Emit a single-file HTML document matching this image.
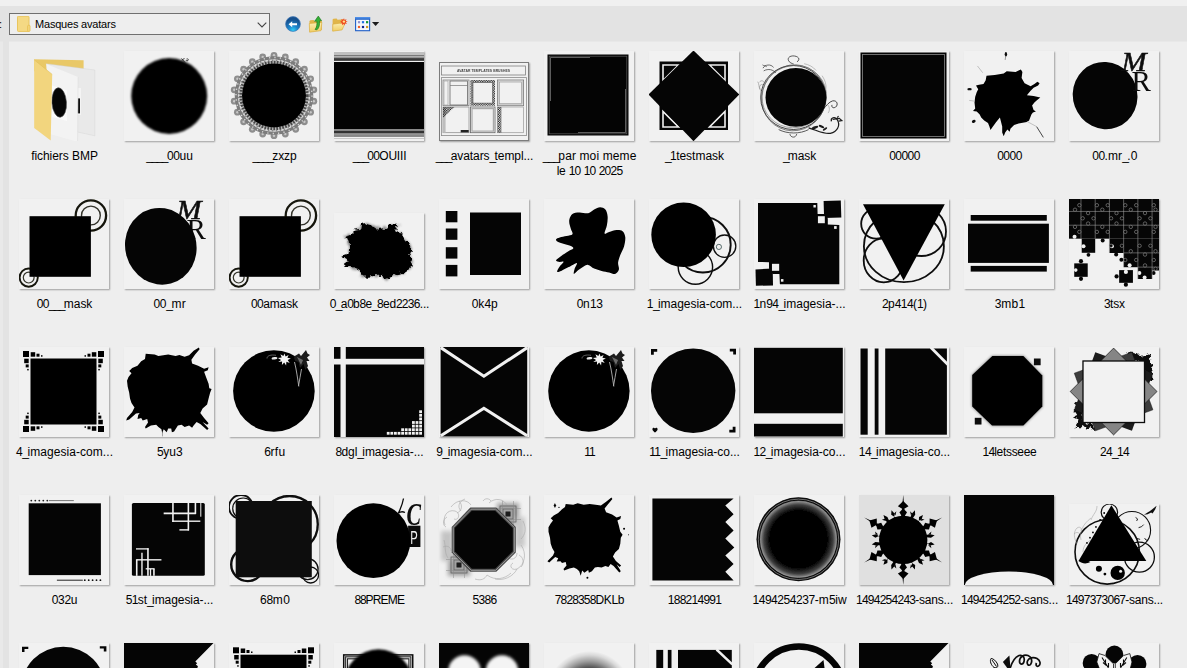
<!DOCTYPE html>
<html lang="fr"><head><meta charset="utf-8"><title>Masques avatars</title>
<style>
html,body{margin:0;padding:0}
body{width:1187px;height:668px;overflow:hidden;position:relative;background:#e3e3e3;font-family:"Liberation Sans",sans-serif;font-size:12px;color:#000}
#top{position:absolute;left:0;top:0;width:1187px;height:6px;background:#f0f0f0}
#lstrip{position:absolute;left:0;top:41px;width:3px;height:627px;background:#e9e9e9;border-top:1px solid #e6e6e6;box-sizing:border-box}
#list{position:absolute;left:9px;top:41px;width:1178px;height:626px;background:#eeeeee;overflow:hidden;border-top:1px solid #e8e8e8}
#combo{position:absolute;left:9px;top:13px;width:259px;height:20px;border:1px solid #6f6f6f;background:#eeeeee}
#combo .txt{position:absolute;left:25px;top:3px;line-height:14px;white-space:nowrap;font-size:11px;letter-spacing:-0.2px}
#lbl{position:absolute;left:-1px;top:17px;line-height:14px;font-size:11px}
.t{position:absolute;background:#f1f1f1;box-shadow:1px 1px 1.5px rgba(0,0,0,.33)}
.t svg{display:block;position:absolute;left:0;top:0}
.n{position:absolute;width:130px;text-align:center;white-space:nowrap;line-height:15px;height:15px}
.ic{position:absolute}
</style></head><body>
<svg width="0" height="0" style="position:absolute"><defs><filter id="txf" x="-10%" y="-10%" width="120%" height="120%"><feGaussianBlur stdDeviation=".22"/></filter></defs></svg>
<div id="top"></div><div id="lstrip"></div>
<div id="lbl">:</div>
<div id="combo"><svg class="ic" style="left:7px;top:2px" width="14" height="17" viewBox="0 0 14 17"><rect x=".5" y=".3" width="11.500" height="15.100" rx=".8" fill="#f4d984" stroke="#e9c55e" stroke-width="1"/><rect x="10.700" y="9.300" width="2.300" height="6.100" rx=".8" fill="#f4d984" stroke="#e6be50" stroke-width=".9"/></svg><span class="txt">Masques avatars</span><svg class="ic" style="left:247px;top:8px" width="10" height="6" viewBox="0 0 10 6"><path d="M0.7 0.7L5 5l4.3-4.3" fill="none" stroke="#444" stroke-width="1.1"/></svg></div>
<svg class="ic" style="left:280px;top:10px" width="105" height="28" viewBox="280 10 105 28">
<defs><radialGradient id="bk" cx="50%" cy="92%" r="75%"><stop offset="0" stop-color="#2fd0f8"/><stop offset=".4" stop-color="#1f86cc"/><stop offset="1" stop-color="#174f8c"/></radialGradient>
<linearGradient id="fy" x1="0" y1="0" x2="0" y2="1"><stop offset="0" stop-color="#fbefb4"/><stop offset="1" stop-color="#f0cd63"/></linearGradient>
<linearGradient id="vb" x1="0" y1="0" x2="0" y2="1"><stop offset="0" stop-color="#5c9cf0"/><stop offset="1" stop-color="#1f5fc4"/></linearGradient>
<filter id="tb" x="-10%" y="-10%" width="120%" height="120%"><feGaussianBlur stdDeviation=".25"/></filter></defs>
<g filter="url(#tb)">
<circle cx="293" cy="24" r="7.400" fill="url(#bk)" stroke="#3f78b8" stroke-width=".7"/>
<path d="M288.600 24.200l3.600-3v2h4.800v2h-4.800v2z" fill="#fff"/>
<path d="M309.400 21l1-.8l3.200-.3l1 1.300l7.200-.6v9.400l-12 1.800z" fill="#e0b548"/>
<path d="M309.300 23.500l12.600-1.100l-1 8.300l-11.300 1.500z" fill="url(#fy)" stroke="#d9aa3a" stroke-width=".6"/>
<path d="M315 29.500c1.700-2 2.200-4.800 1.800-8.400l-2.200.2l3.700-5.200l3.200 4.600l-2 .1c.5 4.500-.6 7.300-2.500 9z" fill="#35b035" stroke="#14701a" stroke-width=".6"/>
<path d="M332.600 19.500l.8-.7l3.200-.3l1 1.300l6-.5l-1 9.700l-10 1.800z" fill="#e0b548"/>
<path d="M332.800 24.200l12.600-1.800l-3.300 7.500l-9.400 1.300z" fill="url(#fy)" stroke="#d9aa3a" stroke-width=".6"/>
<path d="M344 18.200l.7 1.800l1.800-.9l-.7 1.800l1.900.6l-1.800.8l.9 1.700l-1.900-.5l-.3 1.900l-1.200-1.500l-1.400 1.300l.1-1.900l-1.900.2l1.400-1.300l-1.600-1.100l1.900-.3l-.6-1.800l1.700.8z" fill="#f04a1e"/>
<circle cx="343.900" cy="21.600" r="1.200" fill="#ffe08a"/>
<rect x="355.600" y="17.600" width="14" height="13.100" fill="#f6f8fc" stroke="#2060c8" stroke-width="1.100"/>
<rect x="355.100" y="17.100" width="15" height="2.700" fill="url(#vb)"/>
<rect x="357.900" y="21.100" width="2.200" height="2.200" fill="#9292cc"/><rect x="361.900" y="21.100" width="2.200" height="2.200" fill="#2272e4"/><rect x="366" y="21.100" width="2.200" height="2.200" fill="#109434"/>
<rect x="357.900" y="25.900" width="2.200" height="2.200" fill="#f0602c"/><rect x="361.900" y="25.900" width="2.200" height="2.200" fill="#10228e"/><rect x="366" y="25.900" width="2.200" height="2.200" fill="#d09a20"/>
<path d="M372 22h7.200l-3.600 3.900z" fill="#1a1a1a"/>
</g></svg>
<div id="list">
<div class="t" style="left:10px;top:9px;width:90px;height:90px;background:none;box-shadow:none"><svg width="90" height="90" viewBox="0 0 90 90">
<path d="M15.200 8.200L64.600 9.200L64.600 30L30 30L15.200 20z" fill="#e9c867"/>
<path d="M27.200 12.700L75.800 19L75.800 84.800L58.600 81z" fill="#e9e9e9"/>
<path d="M27.200 12.700L75.800 19L75.800 84.800L58.600 81z" fill="none" stroke="#d2d2d2" stroke-width=".4"/>
<rect x="57.500" y="37" width="4.500" height="27" fill="#f4f4f4"/>
<rect x="58.200" y="47.400" width="2.800" height="15" fill="#111"/>
<path d="M27.200 13L59.100 26.100L58.600 90.800L31.700 83.300z" fill="#f3f3f3"/>
<path d="M59.100 26.100L58.600 90.800" stroke="#d8d8d8" stroke-width=".5"/>
<path d="M33 34.500L48 39.500L48 70L33 66z" fill="#fbfbfb"/>
<ellipse cx="40.200" cy="51.500" rx="7.300" ry="14.800" fill="#060606" stroke="#555" stroke-width=".6" transform="rotate(-4 40.200 51.500)"/>
<path d="M15.200 8.800L33.200 23.400L31.700 89.600L15.200 77z" fill="#f2d57e"/>
<path d="M15.200 8.800L33.200 23.400" stroke="#e3bf58" stroke-width=".6"/>
</svg></div>
<div class="t" style="left:115px;top:9px;width:90px;height:90px;"><svg width="90" height="90" viewBox="0 0 90 90"><defs><filter id="b01" x="-20%" y="-20%" width="140%" height="140%"><feGaussianBlur stdDeviation="1.1"/></filter></defs><circle cx="45.200" cy="45" r="38" fill="#050505" filter="url(#b01)"/><path d="M57.500 7.500l3.500 4m-.5-4.500l-2.500 2.500m4.500-1.500c1.500-.5 2.500 .5 1.500 1.500c-1 .8-2 .3-1.500-.5" stroke="#1a1a1a" stroke-width=".8" fill="none"/></svg></div>
<div class="t" style="left:220px;top:9px;width:90px;height:90px;"><svg width="90" height="90" viewBox="0 0 90 90"><defs><filter id="b02" x="-20%" y="-20%" width="140%" height="140%"><feGaussianBlur stdDeviation="0.45"/></filter></defs><g filter="url(#b02)"><circle cx="84.8" cy="50.2" r="3.400" fill="#8e8e8e"/><circle cx="84.8" cy="50.2" r="1.200" fill="#c8c8c8"/><circle cx="81.6" cy="61.2" r="3.400" fill="#8e8e8e"/><circle cx="81.6" cy="61.2" r="1.200" fill="#c8c8c8"/><circle cx="75.4" cy="70.8" r="3.400" fill="#8e8e8e"/><circle cx="75.4" cy="70.8" r="1.200" fill="#c8c8c8"/><circle cx="66.7" cy="78.3" r="3.400" fill="#8e8e8e"/><circle cx="66.7" cy="78.3" r="1.200" fill="#c8c8c8"/><circle cx="56.3" cy="83.1" r="3.400" fill="#8e8e8e"/><circle cx="56.3" cy="83.1" r="1.200" fill="#c8c8c8"/><circle cx="45.0" cy="84.7" r="3.400" fill="#8e8e8e"/><circle cx="45.0" cy="84.7" r="1.200" fill="#c8c8c8"/><circle cx="33.7" cy="83.1" r="3.400" fill="#8e8e8e"/><circle cx="33.7" cy="83.1" r="1.200" fill="#c8c8c8"/><circle cx="23.3" cy="78.3" r="3.400" fill="#8e8e8e"/><circle cx="23.3" cy="78.3" r="1.200" fill="#c8c8c8"/><circle cx="14.6" cy="70.8" r="3.400" fill="#8e8e8e"/><circle cx="14.6" cy="70.8" r="1.200" fill="#c8c8c8"/><circle cx="8.4" cy="61.2" r="3.400" fill="#8e8e8e"/><circle cx="8.4" cy="61.2" r="1.200" fill="#c8c8c8"/><circle cx="5.2" cy="50.2" r="3.400" fill="#8e8e8e"/><circle cx="5.2" cy="50.2" r="1.200" fill="#c8c8c8"/><circle cx="5.2" cy="38.8" r="3.400" fill="#8e8e8e"/><circle cx="5.2" cy="38.8" r="1.200" fill="#c8c8c8"/><circle cx="8.4" cy="27.8" r="3.400" fill="#8e8e8e"/><circle cx="8.4" cy="27.8" r="1.200" fill="#c8c8c8"/><circle cx="14.6" cy="18.2" r="3.400" fill="#8e8e8e"/><circle cx="14.6" cy="18.2" r="1.200" fill="#c8c8c8"/><circle cx="23.3" cy="10.7" r="3.400" fill="#8e8e8e"/><circle cx="23.3" cy="10.7" r="1.200" fill="#c8c8c8"/><circle cx="33.7" cy="5.9" r="3.400" fill="#8e8e8e"/><circle cx="33.7" cy="5.9" r="1.200" fill="#c8c8c8"/><circle cx="45.0" cy="4.3" r="3.400" fill="#8e8e8e"/><circle cx="45.0" cy="4.3" r="1.200" fill="#c8c8c8"/><circle cx="56.3" cy="5.9" r="3.400" fill="#8e8e8e"/><circle cx="56.3" cy="5.9" r="1.200" fill="#c8c8c8"/><circle cx="66.7" cy="10.7" r="3.400" fill="#8e8e8e"/><circle cx="66.7" cy="10.7" r="1.200" fill="#c8c8c8"/><circle cx="75.4" cy="18.2" r="3.400" fill="#8e8e8e"/><circle cx="75.4" cy="18.2" r="1.200" fill="#c8c8c8"/><circle cx="81.6" cy="27.8" r="3.400" fill="#8e8e8e"/><circle cx="81.6" cy="27.8" r="1.200" fill="#c8c8c8"/><circle cx="84.8" cy="38.8" r="3.400" fill="#8e8e8e"/><circle cx="84.8" cy="38.8" r="1.200" fill="#c8c8c8"/><circle cx="45" cy="44.500" r="37.600" fill="none" stroke="#7c7c7c" stroke-width="3.400"/><circle cx="45" cy="44.500" r="38" fill="none" stroke="#dcdcdc" stroke-width="1.400" stroke-dasharray="1.200 4.230"/><circle cx="45" cy="44.500" r="35.300" fill="none" stroke="#d9d9d9" stroke-width="1.600"/><circle cx="45" cy="44.500" r="35.300" fill="none" stroke="#8a8a8a" stroke-width="1.600" stroke-dasharray="1.500 2.500"/><circle cx="45" cy="44.500" r="33.200" fill="none" stroke="#b8b8b8" stroke-width="3"/><circle cx="45" cy="44.500" r="33.200" fill="none" stroke="#4a4a4a" stroke-width="3" stroke-dasharray="1.700 1.300"/></g><circle cx="45" cy="44.400" r="32" fill="#050505" filter="url(#b02)"/></svg></div>
<div class="t" style="left:325px;top:9px;width:90px;height:90px;"><svg width="90" height="90" viewBox="0 0 90 90"><defs><linearGradient id="sg" x1="0" y1="0" x2="0" y2="1"><stop offset="0" stop-color="#a8a8a8"/><stop offset=".35" stop-color="#4a4a4a"/><stop offset="1" stop-color="#262626"/></linearGradient></defs><rect x="0" y="11" width="90" height="67.100" fill="#040404"/><rect x="0" y="1" width="90" height="3" fill="#c0c0c0"/><rect x="0" y="4" width="90" height="0.9" fill="#666"/><rect x="0" y="4.9" width="90" height="1.2" fill="#b2b2b2"/><rect x="0" y="6.1" width="90" height="3.7" fill="url(#sg)"/><rect x="0" y="78.1" width="90" height="1.9" fill="#828282"/><rect x="0" y="80" width="90" height="2.6" fill="#323232"/><rect x="0" y="82.6" width="90" height="1.6" fill="#949494"/><rect x="0" y="84.2" width="90" height="1.6" fill="#737373"/><rect x="0" y="87" width="90" height="0.6" fill="#b0b0b0"/></svg></div>
<div class="t" style="left:430px;top:20px;width:90px;height:79px;"><svg width="90" height="79" viewBox="0 0 90 79"><rect x=".5" y=".5" width="89" height="78" fill="none" stroke="#7c7c7c" stroke-width="1"/><rect x="2.500" y="4" width="84" height="9" fill="none" stroke="#808080" stroke-width=".8"/><text filter="url(#txf)" x="44.500" y="9.900" font-family="Liberation Sans,sans-serif" font-weight="bold" font-size="3.400" text-anchor="middle" fill="#444" textLength="53">AVATAR TEMPLATES BRUSHES</text><rect x="2.500" y="15.600" width="85" height="58" fill="none" stroke="#8a8a8a" stroke-width=".8"/><defs><pattern id="chk" width="2.400" height="2.400" patternUnits="userSpaceOnUse"><rect width="1.200" height="1.200" fill="#111"/><rect x="1.200" y="1.200" width="1.200" height="1.200" fill="#111"/></pattern></defs><rect x="4" y="18" width="26" height="25.700" fill="none" stroke="#777" stroke-width=".7"/><rect x="5" y="19" width="4" height="24" fill="none" stroke="#999" stroke-width=".6"/><rect x="11" y="19" width="17.500" height="24" fill="none" stroke="#666" stroke-width=".8"/><path d="M11 23.500h17.500" stroke="#777" stroke-width=".7"/><rect x="31.400" y="18" width="24.600" height="25.700" fill="url(#chk)"/><rect x="34" y="20.600" width="19.500" height="20.500" fill="#f1f1f1" stroke="#555" stroke-width=".6"/><rect x="58.400" y="18" width="26.200" height="25.700" fill="none" stroke="#777" stroke-width=".8"/><rect x="60.500" y="20" width="22" height="21.700" fill="none" stroke="#999" stroke-width=".7"/><rect x="59.400" y="19" width="24.200" height="23.700" fill="none" stroke="#aaa" stroke-width=".5"/><rect x="4" y="45" width="26" height="25.700" fill="none" stroke="#888" stroke-width=".7"/><rect x="4" y="45" width="2.600" height="25.700" fill="#bdbdbd"/><path d="M4 45h11.500L4 56z" fill="url(#chk)"/><rect x="21.700" y="68" width="8" height="2.400" fill="#222"/><rect x="31.400" y="45" width="24.600" height="25.700" fill="none" stroke="#666" stroke-width=".8"/><rect x="33" y="46.600" width="21.400" height="22.500" fill="none" stroke="#aaa" stroke-width="1.200"/><rect x="58.400" y="45" width="26.200" height="25.700" fill="none" stroke="#999" stroke-width=".7"/><rect x="58.600" y="45" width="3.800" height="25.700" fill="url(#chk)"/></svg></div>
<div class="t" style="left:535px;top:9px;width:90px;height:90px;"><svg width="90" height="90" viewBox="0 0 90 90"><rect x="3.500" y="3.500" width="81" height="81" fill="#040404"/><rect x="5.200" y="5.200" width="77.600" height="77.600" fill="none" stroke="#5a5a5a" stroke-width=".7"/><path d="M6.500 50V6.500H46" fill="none" stroke="#9a9a9a" stroke-width=".6"/><path d="M34 81.500H81.500V38" fill="none" stroke="#9a9a9a" stroke-width=".6"/></svg></div>
<div class="t" style="left:640px;top:9px;width:90px;height:90px;"><svg width="90" height="90" viewBox="0 0 90 90"><rect x="10.500" y="10.500" width="68.500" height="68.500" fill="#050505"/><g fill="none" stroke="#f0f0f0" stroke-width="1.600"><path d="M14 14h15.500L14 29.500z"/><path d="M76 14h-15.500L76 29.500z"/><path d="M14 76h15.500L14 60.500z"/><path d="M76 76h-15.500L76 60.500z"/></g><path d="M44.500 -0.500L90.200 43.500L44.500 90.200L-0.500 43.500z" fill="#050505"/></svg></div>
<div class="t" style="left:745px;top:9px;width:90px;height:90px;"><svg width="90" height="90" viewBox="0 0 90 90"><defs><filter id="b07" x="-20%" y="-20%" width="140%" height="140%"><feGaussianBlur stdDeviation="0.35"/></filter></defs><g fill="none" stroke="#1a1a1a" stroke-width=".8" filter="url(#b07)"><ellipse cx="39.300" cy="46.500" rx="32.600" ry="32"/><ellipse cx="39.800" cy="46.800" rx="32" ry="33.200" stroke="#444" stroke-width=".6" transform="rotate(25 39.800 46.800)"/><ellipse cx="40.300" cy="45.600" rx="32.400" ry="31" stroke="#666" stroke-width=".5" transform="rotate(-20 40.300 45.600)"/><path d="M 39.7 13.0 C 32.9 11.5 32.2 5.2 38.9 4.9 C 44.2 4.9 46.9 8.2 43.0 10.9" stroke-width=".7"/><path d="M 9.0 17.2 C 10.5 13.5 17.2 12.7 19.5 16.5 M 9.7 19.9 C 14.2 17.2 19.5 18.7 21.7 22.0 M 12.7 15.7 C 11.2 14.2 9.7 15.0 8.5 13.9" stroke="#333" stroke-width=".7"/><path d="M 5.2 31.4 C 7.5 28.4 9.7 29.9 10.5 32.2 M 6.0 38.2 C 4.5 34.4 7.5 32.2 9.7 34.4 M 3.7 30.7 C 5.2 32.2 4.5 36.7 6.7 39.7" stroke="#8a8a8a" stroke-width=".6"/><path d="M 54.6 76.8 C 62.1 78.9 69.6 83.4 76.3 82.3 C 83.4 81.3 86.8 74.1 83.1 68.4 C 80.8 65.1 76.3 66.6 77.4 70.4" stroke-width="1.200"/><path d="M 68.9 58.4 C 72.6 54.6 74.9 50.9 78.6 49.9 C 83.1 49.0 84.6 53.9 81.6 56.1 C 79.3 57.6 77.1 56.1 78.0 53.9" stroke-width=".8"/><path d="M 78.6 68.4 L 85.3 67.4 L 87.9 69.6 L 84.6 70.1 M 83.1 66.6 L 84.6 65.1" stroke-width="1.100"/><g fill="#1a1a1a" stroke="none"><ellipse cx="61" cy="76.500" rx="3.500" ry="1.300" transform="rotate(-20 61 76.500)"/><ellipse cx="67.500" cy="75.500" rx="3" ry="1.200" transform="rotate(25 67.500 75.500)"/><ellipse cx="71" cy="78" rx="2.600" ry="1" transform="rotate(-35 71 78)"/></g><path d="M 35.9 83.1 C 36.7 87.1 41.9 87.1 42.7 83.1 M 24.7 78.6 C 33.7 83.1 45.7 83.1 54.6 78.6" stroke-width=".7"/><path d="M 50.1 12.7 C 54.6 13.5 59.1 15.7 62.1 19.5 M 68.1 24.7 C 71.1 29.2 72.6 33.7 71.9 38.2 M 72.6 53.1 C 75.6 54.6 76.3 59.1 74.1 62.1" stroke="#999" stroke-width=".6"/></g><ellipse cx="41.900" cy="46.400" rx="30.400" ry="29.300" fill="#050505"/></svg></div>
<div class="t" style="left:850px;top:9px;width:90px;height:90px;"><svg width="90" height="90" viewBox="0 0 90 90"><rect x="1.500" y="1.500" width="86" height="86" fill="#050505"/><rect x="3.500" y="3.500" width="82" height="82" fill="none" stroke="#8a8a8a" stroke-width=".8"/></svg></div>
<div class="t" style="left:955px;top:9px;width:90px;height:90px;"><svg width="90" height="90" viewBox="0 0 90 90"><defs><filter id="b09" x="-20%" y="-20%" width="140%" height="140%"><feGaussianBlur stdDeviation="0.4"/></filter></defs><g filter="url(#b09)"><path d="M22.5 24.7L30.7 24.0L39.7 22.5L42.7 20.2L51.6 21.0L54.6 19.5L56.9 18.4L58.4 21.0L57.6 26.9L60.6 32.2L66.6 35.2L70.4 32.9L73.4 30.7L75.6 32.2L74.1 34.4L69.6 36.7L66.6 39.7L62.9 44.2L69.6 44.9L76.3 46.4L72.6 49.4L70.4 51.6L68.1 54.6L69.6 59.1L71.9 60.6L68.9 61.4L67.4 63.6L65.1 69.6L62.9 71.1L54.6 72.6L50.1 74.1L46.4 77.8L45.7 80.8L43.4 78.6L41.2 81.6L39.7 85.3L38.2 81.6L38.2 75.6L35.9 66.6L32.2 71.1L28.4 76.3L26.5 78.9L25.4 75.6L24.0 71.9L20.2 69.6L17.2 66.6L15.7 63.6L12.7 60.6L9.0 59.9L11.2 57.6L10.5 51.6L11.2 45.7L12.7 41.2L14.2 38.2L12.0 34.4L15.0 33.7L19.5 32.9L21.7 29.2Z" fill="#050505"/><ellipse cx="41.92" cy="3.29" rx="1.200" ry="2.200" fill="#111"/><path d="M41.77 4.49L41.17 8.98" stroke="#444" stroke-width=".5"/><ellipse cx="5.54" cy="38.17" rx="2.200" ry="1.200" fill="#111"/><ellipse cx="9.73" cy="70.36" rx="2" ry="1.400" fill="#111" transform="rotate(-25 9.73 70.36)"/><path d="M72.6 75.6L79.34 86.38" stroke="#333" stroke-width=".9"/><path d="M13.47 14.97L18.71 21.71M62.87 70.36L72.6 75.6M5.24 49.4L10.48 50.15" stroke="#aaa" stroke-width=".7"/></g></svg></div>
<div class="t" style="left:1060px;top:9px;width:90px;height:90px;"><svg width="90" height="90" viewBox="0 0 90 90"><ellipse cx="36.100" cy="44.600" rx="32.200" ry="33.800" fill="#050505" transform="rotate(-20 36.100 44.600)"/><text filter="url(#txf)" x="52.500" y="19.500" font-family="Liberation Serif,serif" font-style="italic" font-size="27" fill="#0a0a0a" stroke="#0a0a0a" stroke-width=".5" textLength="25" lengthAdjust="spacingAndGlyphs">M</text><text filter="url(#txf)" x="62.500" y="39.700" font-family="Liberation Serif,serif" font-size="29" fill="#0a0a0a">R</text></svg></div>
<div class="t" style="left:10px;top:157px;width:90px;height:90px;"><svg width="90" height="90" viewBox="0 0 90 90"><defs><filter id="bq" x="-20%" y="-20%" width="140%" height="140%"><feGaussianBlur stdDeviation="0.3"/></filter></defs><g filter="url(#bq)"><g fill="none" stroke="#14140a"><circle cx="71.900" cy="16.500" r="15.200" stroke-width="2.300"/><circle cx="71.900" cy="16.500" r="9.400" stroke-width="1.400" stroke="#33332a"/><circle cx="9.700" cy="78.600" r="9.100" stroke-width="1.900"/><circle cx="9.700" cy="78.600" r="5.400" stroke-width="1.200" stroke="#33332a"/></g><rect x="10.500" y="17.200" width="61.400" height="60.600" fill="#050505"/></g></svg></div>
<div class="t" style="left:115px;top:157px;width:90px;height:90px;"><svg width="90" height="90" viewBox="0 0 90 90"><text filter="url(#txf)" x="52.500" y="19.500" font-family="Liberation Serif,serif" font-style="italic" font-size="27" fill="#0a0a0a" stroke="#0a0a0a" stroke-width=".5" textLength="25" lengthAdjust="spacingAndGlyphs">M</text><text filter="url(#txf)" x="62.500" y="39.700" font-family="Liberation Serif,serif" font-size="29" fill="#0a0a0a">R</text><ellipse cx="36.800" cy="47.300" rx="35.600" ry="38.600" fill="#050505" transform="rotate(-15 36.800 47.300)"/></svg></div>
<div class="t" style="left:220px;top:157px;width:90px;height:90px;"><svg width="90" height="90" viewBox="0 0 90 90"><defs><filter id="bq2" x="-20%" y="-20%" width="140%" height="140%"><feGaussianBlur stdDeviation="0.3"/></filter></defs><g filter="url(#bq2)"><g fill="none" stroke="#14140a"><circle cx="71.900" cy="16.500" r="15.200" stroke-width="2.300"/><circle cx="71.900" cy="16.500" r="9.400" stroke-width="1.400" stroke="#33332a"/><circle cx="9.700" cy="78.600" r="9.100" stroke-width="1.900"/><circle cx="9.700" cy="78.600" r="5.400" stroke-width="1.200" stroke="#33332a"/></g><rect x="10.500" y="17.200" width="61.400" height="60.600" fill="#050505"/></g></svg></div>
<div class="t" style="left:325px;top:171px;width:90px;height:76px;"><svg width="90" height="76" viewBox="0 0 90 76"><defs><filter id="rough" x="-10%" y="-10%" width="120%" height="120%"><feTurbulence type="fractalNoise" baseFrequency="0.22" numOctaves="2" seed="3" result="n"/><feDisplacementMap in="SourceGraphic" in2="n" scale="7" xChannelSelector="R" yChannelSelector="G"/><feGaussianBlur stdDeviation=".45"/></filter><filter id="rough2" x="-15%" y="-15%" width="130%" height="130%"><feTurbulence type="fractalNoise" baseFrequency="0.18" numOctaves="2" seed="8" result="n"/><feDisplacementMap in="SourceGraphic" in2="n" scale="11" xChannelSelector="R" yChannelSelector="G"/><feGaussianBlur stdDeviation="1"/></filter></defs><path d="M28.4 11.2C29.7 10.2 32.6 10.0 34.4 10.5C36.3 11.0 37.8 13.3 39.7 14.2C41.5 15.1 43.7 15.6 45.7 15.7C47.7 15.8 49.9 15.6 51.6 15.0C53.4 14.3 54.0 12.4 56.1 12.0C58.3 11.5 63.6 11.5 64.4 12.3C65.1 13.0 60.3 15.1 60.6 16.5C61.0 17.8 65.0 18.7 66.6 20.2C68.2 21.7 69.1 23.8 70.4 25.4C71.6 27.1 73.0 28.6 74.1 29.9C75.2 31.3 76.7 31.9 77.1 33.7C77.5 35.4 76.2 38.0 76.3 40.4C76.5 42.8 77.8 45.4 77.8 47.9C77.8 50.4 77.2 53.6 76.3 55.4C75.5 57.1 74.0 57.5 72.6 58.4C71.2 59.3 69.9 60.1 68.1 60.6C66.4 61.1 64.1 60.9 62.1 61.4C60.1 61.9 58.0 62.9 56.1 63.6C54.3 64.4 52.4 66.0 50.9 65.9C49.4 65.7 49.0 63.4 47.2 62.9C45.3 62.4 42.2 62.7 39.7 62.9C37.2 63.0 34.3 63.9 32.2 63.6C30.1 63.4 28.2 62.5 26.9 61.4C25.7 60.3 26.3 58.1 24.7 56.9C23.1 55.6 19.5 54.6 17.2 53.9C15.0 53.1 12.0 53.4 11.2 52.4C10.5 51.4 13.2 49.3 12.7 47.9C12.2 46.5 8.0 45.4 8.2 44.2C8.5 42.9 13.1 42.3 14.2 40.4C15.3 38.5 15.0 35.2 15.0 32.9C15.0 30.7 15.0 28.4 14.2 26.9C13.5 25.4 10.1 24.8 10.5 24.0C10.9 23.1 14.8 22.7 16.5 21.7C18.1 20.7 18.5 18.8 20.2 18.0C22.0 17.1 25.6 17.6 26.9 16.5C28.3 15.3 27.2 12.2 28.4 11.2Z" fill="#333" opacity=".55" filter="url(#rough2)"/><path d="M28.4 11.2C29.7 10.2 32.6 10.0 34.4 10.5C36.3 11.0 37.8 13.3 39.7 14.2C41.5 15.1 43.7 15.6 45.7 15.7C47.7 15.8 49.9 15.6 51.6 15.0C53.4 14.3 54.0 12.4 56.1 12.0C58.3 11.5 63.6 11.5 64.4 12.3C65.1 13.0 60.3 15.1 60.6 16.5C61.0 17.8 65.0 18.7 66.6 20.2C68.2 21.7 69.1 23.8 70.4 25.4C71.6 27.1 73.0 28.6 74.1 29.9C75.2 31.3 76.7 31.9 77.1 33.7C77.5 35.4 76.2 38.0 76.3 40.4C76.5 42.8 77.8 45.4 77.8 47.9C77.8 50.4 77.2 53.6 76.3 55.4C75.5 57.1 74.0 57.5 72.6 58.4C71.2 59.3 69.9 60.1 68.1 60.6C66.4 61.1 64.1 60.9 62.1 61.4C60.1 61.9 58.0 62.9 56.1 63.6C54.3 64.4 52.4 66.0 50.9 65.9C49.4 65.7 49.0 63.4 47.2 62.9C45.3 62.4 42.2 62.7 39.7 62.9C37.2 63.0 34.3 63.9 32.2 63.6C30.1 63.4 28.2 62.5 26.9 61.4C25.7 60.3 26.3 58.1 24.7 56.9C23.1 55.6 19.5 54.6 17.2 53.9C15.0 53.1 12.0 53.4 11.2 52.4C10.5 51.4 13.2 49.3 12.7 47.9C12.2 46.5 8.0 45.4 8.2 44.2C8.5 42.9 13.1 42.3 14.2 40.4C15.3 38.5 15.0 35.2 15.0 32.9C15.0 30.7 15.0 28.4 14.2 26.9C13.5 25.4 10.1 24.8 10.5 24.0C10.9 23.1 14.8 22.7 16.5 21.7C18.1 20.7 18.5 18.8 20.2 18.0C22.0 17.1 25.6 17.6 26.9 16.5C28.3 15.3 27.2 12.2 28.4 11.2Z" fill="#050505" filter="url(#rough)"/></svg></div>
<div class="t" style="left:430px;top:157px;width:90px;height:90px;"><svg width="90" height="90" viewBox="0 0 90 90"><g fill="#050505"><rect x="31" y="13.500" width="51" height="62.500"/><rect x="6.800" y="12" width="11.600" height="11.300"/><rect x="6.800" y="29.500" width="11.600" height="11.300"/><rect x="6.800" y="48.200" width="11.600" height="11.400"/><rect x="6.800" y="65.900" width="11.600" height="11.500"/></g></svg></div>
<div class="t" style="left:535px;top:157px;width:90px;height:90px;"><svg width="90" height="90" viewBox="0 0 90 90"><defs><filter id="b15" x="-20%" y="-20%" width="140%" height="140%"><feGaussianBlur stdDeviation="0.4"/></filter></defs><path d="M25.4 20.2C25.9 18.6 26.8 16.1 28.4 15.0C30.1 13.8 32.6 13.6 35.2 13.5C37.8 13.3 41.7 14.7 44.2 14.2C46.7 13.7 48.2 11.5 50.1 10.5C52.1 9.5 54.3 8.2 56.1 8.2C58.0 8.2 60.1 9.0 61.4 10.5C62.6 12.0 63.4 14.6 63.6 17.2C63.9 19.8 63.4 23.3 62.9 26.2C62.4 29.1 60.3 33.3 60.6 34.4C61.0 35.6 63.1 33.5 65.1 32.9C67.1 32.4 70.4 31.1 72.6 31.0C74.9 30.9 77.1 31.0 78.6 32.2C80.0 33.4 81.0 35.7 81.3 38.2C81.5 40.7 80.9 44.2 80.1 47.2C79.3 50.1 77.3 53.4 76.3 56.1C75.3 58.9 74.4 61.3 74.1 63.6C73.9 66.0 75.3 68.5 74.9 70.4C74.4 72.2 72.7 74.4 71.1 74.9C69.5 75.3 67.4 73.9 65.1 73.4C62.9 72.9 60.1 72.5 57.6 71.9C55.1 71.2 52.4 70.6 50.1 69.6C47.9 68.6 46.0 66.1 44.2 65.9C42.3 65.6 40.5 67.2 38.9 68.1C37.3 69.0 35.9 70.0 34.4 71.1C32.9 72.2 30.6 75.1 29.9 74.9C29.3 74.6 30.2 71.4 30.7 69.6C31.2 67.8 33.9 64.2 32.9 63.9C31.9 63.7 27.3 66.8 24.7 68.1C22.1 69.4 19.2 71.1 17.2 71.9C15.3 72.6 13.3 73.4 13.0 72.6C12.8 71.9 14.6 69.0 15.7 67.4C16.8 65.7 19.5 63.6 19.5 62.9C19.5 62.1 17.0 63.1 15.7 62.9C14.5 62.6 11.7 62.4 12.0 61.4C12.2 60.4 15.2 58.4 17.2 56.9C19.2 55.4 22.0 53.6 24.0 52.4C25.9 51.1 28.7 50.3 29.2 49.4C29.7 48.5 28.4 47.6 26.9 46.9C25.4 46.1 22.3 45.6 20.2 44.9C18.1 44.3 15.6 43.7 14.2 43.0C12.8 42.2 11.7 41.2 12.0 40.4C12.2 39.7 14.0 39.0 15.7 38.5C17.5 37.9 20.3 37.5 22.5 37.0C24.6 36.4 27.7 36.4 28.4 35.2C29.2 34.0 27.4 31.7 26.9 29.9C26.4 28.2 25.7 26.3 25.4 24.7C25.2 23.1 25.0 21.8 25.4 20.2Z" fill="#050505" filter="url(#b15)"/></svg></div>
<div class="t" style="left:640px;top:157px;width:90px;height:90px;"><svg width="90" height="90" viewBox="0 0 90 90"><defs><filter id="b16" x="-20%" y="-20%" width="140%" height="140%"><feGaussianBlur stdDeviation="0.3"/></filter></defs><g filter="url(#b16)"><g fill="none" stroke="#0c0c0c"><circle cx="53.900" cy="45.700" r="27.800" stroke-width="1.900"/><circle cx="75.600" cy="47.200" r="11.200" stroke-width="1.300"/><circle cx="46.400" cy="68.100" r="17.200" stroke-width="1.400"/><circle cx="69.900" cy="47.900" r="2.600" stroke-width=".9" stroke="#4a6060"/></g><circle cx="34.600" cy="35.800" r="32.300" fill="#050505"/></g></svg></div>
<div class="t" style="left:745px;top:157px;width:90px;height:90px;"><svg width="90" height="90" viewBox="0 0 90 90"><g fill="#050505"><path d="M4.0 4.0L63.3 4.0L63.6 15.0L70.4 15.0L73.8 19.5L73.8 25.4L85.3 25.9L85.3 85.3L25.9 85.3L25.4 74.9L18.7 74.9L15.0 69.6L15.0 63.3L4.0 62.9Z"/><path d="M69.6 1.9L86.8 1.5L87.3 18.4L70.1 19.0Z"/><path d="M1.5 70.4L18.7 69.6L19.0 86.4L1.9 86.8Z"/></g><g fill="#f1f1f1"><rect x="63.92" y="17.22" width="6.900" height="7"/><rect x="17.96" y="64.82" width="7.200" height="7"/><rect x="59.43" y="5.99" width="2.400" height="2.500"/><rect x="80.09" y="27.1" width="2.600" height="2.800"/><rect x="26.95" y="80.09" width="2.500" height="2.600"/></g></svg></div>
<div class="t" style="left:850px;top:157px;width:90px;height:90px;"><svg width="90" height="90" viewBox="0 0 90 90"><defs><filter id="b18" x="-20%" y="-20%" width="140%" height="140%"><feGaussianBlur stdDeviation="0.3"/></filter></defs><g filter="url(#b18)"><g fill="none" stroke="#0a0a0a" stroke-width="1.800"><circle cx="17.200" cy="24.700" r="15"/><ellipse cx="44.900" cy="47.200" rx="40" ry="36"/><circle cx="62.500" cy="32.500" r="24.500"/><ellipse cx="24.700" cy="61.400" rx="20" ry="22"/></g><path d="M4 5.200H85.800L44.600 81.500z" fill="#050505"/></g></svg></div>
<div class="t" style="left:955px;top:157px;width:90px;height:90px;"><svg width="90" height="90" viewBox="0 0 90 90"><g fill="#050505"><rect x="6.700" y="16" width="76.100" height="5.700"/><rect x="4" y="24.700" width="80.900" height="39.200"/><rect x="6.700" y="66.900" width="76.100" height="5.700"/></g></svg></div>
<div class="t" style="left:1060px;top:157px;width:90px;height:90px;background:#f1f1f1"><svg width="90" height="90" viewBox="0 0 90 90"><g fill="#060606"><rect x="0" y="0" width="90" height="39.67"/><rect x="40.42" y="39.57" width="49.58" height="14.419999999999998"/><rect x="54.64" y="53.79" width="35.36" height="14.419999999999998"/><rect x="68.86" y="68.01" width="14.219999999999999" height="11.980000000000004"/><rect x="83.08" y="68.01" width="6.920000000000002" height="3.500"/><rect x="12.72" y="39.57" width="13.479999999999999" height="14.219999999999999"/><circle cx="19.46" cy="55.84" r="1.900"/><circle cx="33.68" cy="41.47" r="2"/><circle cx="47.16" cy="55.39" r="2"/><circle cx="52.4" cy="60.63" r="2"/><rect x="5.24" y="64.37" width="13.47" height="13.469999999999999"/><circle cx="11.98" cy="62.13" r="2.100"/><circle cx="11.98" cy="79.79" r="2.100"/><rect x="50.15" y="71.11" width="13.770000000000003" height="12.719999999999999"/><circle cx="47.6" cy="77.4" r="2.100"/><circle cx="56.89" cy="85.63" r="2.100"/><circle cx="84.58" cy="74.1" r="2"/><circle cx="88.32" cy="68.86" r="2"/></g><g fill="#f1f1f1"><circle cx="5.54" cy="37.87" r="2"/><circle cx="42.96" cy="47.16" r="2"/><circle cx="14.52" cy="47.16" r="2"/><circle cx="56.89" cy="72.9" r="2.100"/><circle cx="6.74" cy="71.11" r="1.800"/><circle cx="60.63" cy="66.32" r="2"/><circle cx="70.36" cy="74.1" r="2"/><circle cx="75.6" cy="78.59" r="2"/></g><g stroke="#a4a4a4" stroke-width=".55" fill="none"><path d="M11.98 0V39.67"/><path d="M26.2 0V39.67"/><path d="M40.42 0V53.89"/><path d="M54.64 0V68.11"/><path d="M68.86 0V80.09"/><path d="M83.08 0V80.09"/><path d="M0 12.43H90"/><path d="M0 26.2H90"/><path d="M54.64 53.89H90"/><path d="M68.86 68.11H90"/><circle cx="10.3" cy="6.2" r="1.700" fill="#060606"/><circle cx="13.7" cy="19.3" r="1.700" fill="#060606"/><circle cx="10.3" cy="32.9" r="1.700" fill="#060606"/><circle cx="27.9" cy="6.2" r="1.700" fill="#060606"/><circle cx="24.5" cy="19.3" r="1.700" fill="#060606"/><circle cx="27.9" cy="32.9" r="1.700" fill="#060606"/><circle cx="38.7" cy="6.2" r="1.700" fill="#060606"/><circle cx="42.1" cy="19.3" r="1.700" fill="#060606"/><circle cx="38.7" cy="32.9" r="1.700" fill="#060606"/><circle cx="42.1" cy="46.8" r="1.700" fill="#060606"/><circle cx="56.3" cy="6.2" r="1.700" fill="#060606"/><circle cx="52.9" cy="19.3" r="1.700" fill="#060606"/><circle cx="56.3" cy="32.9" r="1.700" fill="#060606"/><circle cx="52.9" cy="46.8" r="1.700" fill="#060606"/><circle cx="56.3" cy="61.0" r="1.700" fill="#060606"/><circle cx="67.2" cy="6.2" r="1.700" fill="#060606"/><circle cx="70.6" cy="19.3" r="1.700" fill="#060606"/><circle cx="67.2" cy="32.9" r="1.700" fill="#060606"/><circle cx="70.6" cy="46.8" r="1.700" fill="#060606"/><circle cx="67.2" cy="61.0" r="1.700" fill="#060606"/><circle cx="84.8" cy="6.2" r="1.700" fill="#060606"/><circle cx="81.4" cy="19.3" r="1.700" fill="#060606"/><circle cx="84.8" cy="32.9" r="1.700" fill="#060606"/><circle cx="81.4" cy="46.8" r="1.700" fill="#060606"/><circle cx="84.8" cy="61.0" r="1.700" fill="#060606"/><circle cx="6.0" cy="10.7" r="1.700" fill="#060606"/><circle cx="19.1" cy="14.1" r="1.700" fill="#060606"/><circle cx="33.3" cy="10.7" r="1.700" fill="#060606"/><circle cx="47.5" cy="14.1" r="1.700" fill="#060606"/><circle cx="61.8" cy="10.7" r="1.700" fill="#060606"/><circle cx="76.0" cy="14.1" r="1.700" fill="#060606"/><circle cx="86.5" cy="10.7" r="1.700" fill="#060606"/><circle cx="6.0" cy="27.9" r="1.700" fill="#060606"/><circle cx="19.1" cy="24.5" r="1.700" fill="#060606"/><circle cx="33.3" cy="27.9" r="1.700" fill="#060606"/><circle cx="47.5" cy="24.5" r="1.700" fill="#060606"/><circle cx="61.8" cy="27.9" r="1.700" fill="#060606"/><circle cx="76.0" cy="24.5" r="1.700" fill="#060606"/><circle cx="86.5" cy="27.9" r="1.700" fill="#060606"/><circle cx="61.8" cy="52.2" r="1.700" fill="#060606"/><circle cx="76.0" cy="55.6" r="1.700" fill="#060606"/><circle cx="86.5" cy="52.2" r="1.700" fill="#060606"/><circle cx="76.0" cy="66.4" r="1.700" fill="#060606"/><circle cx="86.5" cy="69.8" r="1.700" fill="#060606"/></g></svg></div>
<div class="t" style="left:10px;top:305px;width:90px;height:90px;"><svg width="90" height="90" viewBox="0 0 90 90"><defs><filter id="b20" x="-20%" y="-20%" width="140%" height="140%"><feGaussianBlur stdDeviation="0.3"/></filter></defs><g fill="#050505" filter="url(#b20)"><rect x="11.500" y="11.500" width="66" height="66"/><g><rect x="4" y="4" width="6" height="6"/><rect x="11.7" y="5.2" width="4.5" height="4.5"/><rect x="17.5" y="6.7" width="3" height="3"/><rect x="22" y="8.2" width="1.5" height="1.5"/><rect x="5.2" y="11.7" width="4.5" height="4.5"/><rect x="6.7" y="17.4" width="3" height="3"/><rect x="8.2" y="21.9" width="1.5" height="1.5"/></g><g transform="translate(89 0) scale(-1 1)"><rect x="4" y="4" width="6" height="6"/><rect x="11.7" y="5.2" width="4.5" height="4.5"/><rect x="17.5" y="6.7" width="3" height="3"/><rect x="22" y="8.2" width="1.5" height="1.5"/><rect x="5.2" y="11.7" width="4.5" height="4.5"/><rect x="6.7" y="17.4" width="3" height="3"/><rect x="8.2" y="21.9" width="1.5" height="1.5"/></g><g transform="translate(0 89) scale(1 -1)"><rect x="4" y="4" width="6" height="6"/><rect x="11.7" y="5.2" width="4.5" height="4.5"/><rect x="17.5" y="6.7" width="3" height="3"/><rect x="22" y="8.2" width="1.5" height="1.5"/><rect x="5.2" y="11.7" width="4.5" height="4.5"/><rect x="6.7" y="17.4" width="3" height="3"/><rect x="8.2" y="21.9" width="1.5" height="1.5"/></g><g transform="translate(89 89) scale(-1 -1)"><rect x="4" y="4" width="6" height="6"/><rect x="11.7" y="5.2" width="4.5" height="4.5"/><rect x="17.5" y="6.7" width="3" height="3"/><rect x="22" y="8.2" width="1.5" height="1.5"/><rect x="5.2" y="11.7" width="4.5" height="4.5"/><rect x="6.7" y="17.4" width="3" height="3"/><rect x="8.2" y="21.9" width="1.5" height="1.5"/></g></g></svg></div>
<div class="t" style="left:115px;top:305px;width:90px;height:90px;"><svg width="90" height="90" viewBox="0 0 90 90"><defs><filter id="b21" x="-20%" y="-20%" width="140%" height="140%"><feGaussianBlur stdDeviation="0.35"/></filter></defs><g filter="url(#b21)"><path d="M21.7 6.7L30.7 7.5L34.4 9.0L44.2 7.5L51.6 9.0L55.4 7.9L60.6 9.7L65.1 8.2L69.6 3.7L74.9 0.4L75.6 2.2L71.1 7.5L67.4 12.7L68.1 16.5L74.1 18.7L80.1 21.7L84.6 20.2L83.8 23.2L80.1 24.7L82.3 30.7L84.6 36.7L85.3 41.2L87.6 41.9L86.1 45.7L84.6 51.6L83.1 57.6L78.6 61.4L76.3 65.9L80.1 71.1L84.6 76.3L83.1 77.8L78.6 74.9L84.6 81.6L83.1 83.1L76.3 77.1L72.6 74.9L69.6 78.6L68.1 80.8L65.1 78.6L60.6 80.1L57.6 77.8L53.9 78.6L50.1 84.6L47.9 85.3L47.2 81.6L44.2 81.6L42.7 85.3L39.7 82.3L38.2 86.1L37.4 82.3L34.4 80.1L32.2 77.8L26.9 78.6L21.7 81.6L21.0 80.1L24.0 75.6L23.2 71.9L18.7 73.4L17.2 71.1L13.5 71.9L14.2 68.1L15.7 65.9L12.0 66.6L5.2 72.6L2.2 73.4L3.0 71.1L8.2 65.1L10.5 60.6L7.5 56.1L6.0 51.6L5.2 45.7L3.7 39.7L3.0 33.7L4.5 29.9L7.5 26.2L5.2 24.0L8.2 21.0L13.5 18.7L17.2 14.2L21.0 12.0Z" fill="#050505"/><path d="M38.47 84.58V89.37" stroke="#555" stroke-width=".5"/></g></svg></div>
<div class="t" style="left:220px;top:305px;width:90px;height:90px;"><svg width="90" height="90" viewBox="0 0 90 90"><defs><filter id="b22" x="-20%" y="-20%" width="140%" height="140%"><feGaussianBlur stdDeviation="0.65"/></filter><filter id="b22f" x="-20%" y="-20%" width="140%" height="140%"><feGaussianBlur stdDeviation="0.35"/></filter></defs><circle cx="44.900" cy="44" r="40.8" fill="#050505" filter="url(#b22)"/><g filter="url(#b22f)"><path d="M65 9.500L70 6.500L72 9L77 3L78.500 6.500L81 8L78 10.500L80.500 14L77.500 14L79 19L76.500 23L74.500 17L71 21L69.500 15L66 14z" fill="#1c1c1c"/><path d="M68 10l6 3l-2 5z" fill="#6a6a6a"/><path d="M55.400 6.500l1.200 3l3-1.600l-1.200 2.800l3.500 .8l-3.200 1.500l2 3l-3.300-1.200l-.3 3.800l-1.900-3l-2.300 2.500l.2-3.500l-3.800 .5l2.800-2.200l-3.200-2l3.800-.4l-1.300-3.300l3 1.800z" fill="#f4f4f4"/><path d="M38 11.500c0-3 4-4 9-3.200" fill="none" stroke="#9a9a9a" stroke-width=".6"/><ellipse cx="45.500" cy="11.300" rx="3" ry="1.200" fill="#e8e8e8" transform="rotate(-8 45.500 11.300)"/><path d="M65.500 15c2 8 3 16 4.300 24.500M72.500 22c-1 6-2 11-3 17" fill="none" stroke="#b5b5b5" stroke-width=".9"/></g></svg></div>
<div class="t" style="left:325px;top:305px;width:90px;height:90px;"><svg width="90" height="90" viewBox="0 0 90 90"><rect x="0" y="0" width="90" height="90" fill="#050505"/><rect x="6.500" y="0" width="5.300" height="90" fill="#f1f1f1"/><rect x="0" y="11.800" width="90" height="5.700" fill="#f1f1f1"/><g fill="#f1f1f1"><rect x="52.8" y="84.9" width="2.800" height="2.800"/><rect x="56.4" y="84.9" width="2.800" height="2.800"/><rect x="60.0" y="84.9" width="2.800" height="2.800"/><rect x="63.6" y="84.9" width="2.800" height="2.800"/><rect x="67.2" y="84.9" width="2.800" height="2.800"/><rect x="70.8" y="84.9" width="2.800" height="2.800"/><rect x="74.4" y="84.9" width="2.800" height="2.800"/><rect x="78.0" y="84.9" width="2.800" height="2.800"/><rect x="81.6" y="84.9" width="2.800" height="2.800"/><rect x="85.2" y="84.9" width="2.800" height="2.800"/><rect x="67.2" y="81.3" width="2.800" height="2.800"/><rect x="70.8" y="81.3" width="2.800" height="2.800"/><rect x="74.4" y="81.3" width="2.800" height="2.800"/><rect x="78.0" y="81.3" width="2.800" height="2.800"/><rect x="81.6" y="81.3" width="2.800" height="2.800"/><rect x="85.2" y="81.3" width="2.800" height="2.800"/><rect x="78.0" y="77.7" width="2.800" height="2.800"/><rect x="81.6" y="77.7" width="2.800" height="2.800"/><rect x="85.2" y="77.7" width="2.800" height="2.800"/><rect x="78.0" y="74.1" width="2.800" height="2.800"/><rect x="81.6" y="74.1" width="2.800" height="2.800"/><rect x="85.2" y="74.1" width="2.800" height="2.800"/><rect x="85.2" y="70.5" width="2.800" height="2.800"/><rect x="85.2" y="66.9" width="2.800" height="2.800"/><rect x="85.2" y="63.3" width="2.800" height="2.800"/></g></svg></div>
<div class="t" style="left:430px;top:305px;width:90px;height:90px;"><svg width="90" height="90" viewBox="0 0 90 90"><rect x="1.600" y="0" width="86.600" height="89.500" fill="#050505"/><path d="M1.800 .6L44.900 29.200L88.200 .6M1.800 88.700L44.900 61.300L88.200 88.700" fill="none" stroke="#f1f1f1" stroke-width="3.100"/></svg></div>
<div class="t" style="left:535px;top:305px;width:90px;height:90px;"><svg width="90" height="90" viewBox="0 0 90 90"><defs><filter id="b25" x="-20%" y="-20%" width="140%" height="140%"><feGaussianBlur stdDeviation="0.4"/></filter><filter id="b25f" x="-20%" y="-20%" width="140%" height="140%"><feGaussianBlur stdDeviation="0.35"/></filter></defs><circle cx="44.900" cy="44" r="40.7" fill="#050505" filter="url(#b25)"/><g filter="url(#b25f)"><path d="M65 9.500L70 6.500L72 9L77 3L78.500 6.500L81 8L78 10.500L80.500 14L77.500 14L79 19L76.500 23L74.500 17L71 21L69.500 15L66 14z" fill="#1c1c1c"/><path d="M68 10l6 3l-2 5z" fill="#6a6a6a"/><path d="M55.400 6.500l1.200 3l3-1.600l-1.200 2.800l3.500 .8l-3.200 1.500l2 3l-3.300-1.200l-.3 3.800l-1.900-3l-2.300 2.500l.2-3.500l-3.800 .5l2.800-2.200l-3.200-2l3.800-.4l-1.300-3.300l3 1.800z" fill="#f4f4f4"/><path d="M38 11.500c0-3 4-4 9-3.200" fill="none" stroke="#9a9a9a" stroke-width=".6"/><ellipse cx="45.500" cy="11.300" rx="3" ry="1.200" fill="#e8e8e8" transform="rotate(-8 45.500 11.300)"/><path d="M65.500 15c2 8 3 16 4.300 24.500M72.500 22c-1 6-2 11-3 17" fill="none" stroke="#b5b5b5" stroke-width=".9"/></g></svg></div>
<div class="t" style="left:640px;top:305px;width:90px;height:90px;"><svg width="90" height="90" viewBox="0 0 90 90"><circle cx="44.200" cy="43.800" r="42.200" fill="#050505"/><g fill="#050505"><path d="M2 2h6.200v2.800h-3.400v3H2z"/><path d="M87 1.700h-6.200v2.800h3.400v3H87z"/><path d="M86.500 85.500h-6.200v-2.800h3.400v-3h2.800z"/><path d="M3.400 82.200c0-1.800 2-2 2.600-.6c.6-1.400 2.600-1.200 2.600 .6c0 1.400-1.600 2.400-2.600 3.400c-1-1-2.600-2-2.600-3.400z"/></g></svg></div>
<div class="t" style="left:745px;top:305px;width:90px;height:90px;"><svg width="90" height="90" viewBox="0 0 90 90"><rect x="0" y=".800" width="88.800" height="88.700" fill="#050505"/><rect x="0" y="66.300" width="90" height="10.500" fill="#f1f1f1"/></svg></div>
<div class="t" style="left:850px;top:305px;width:90px;height:90px;"><svg width="90" height="90" viewBox="0 0 90 90"><rect x="1.500" y="1.500" width="86.400" height="86.200" fill="#050505"/><rect x="8.700" y="0" width="7" height="90" fill="#f1f1f1"/><rect x="19.500" y="0" width="6.700" height="90" fill="#f1f1f1"/><path d="M71.900 .5L88.800 17.500" stroke="#f1f1f1" stroke-width="2.800"/></svg></div>
<div class="t" style="left:955px;top:305px;width:90px;height:90px;"><svg width="90" height="90" viewBox="0 0 90 90"><defs><filter id="b29" x="-20%" y="-20%" width="140%" height="140%"><feGaussianBlur stdDeviation="0.45"/></filter><filter id="b29h" x="-20%" y="-20%" width="140%" height="140%"><feGaussianBlur stdDeviation="1.4"/></filter><filter id="b29b" x="-20%" y="-20%" width="140%" height="140%"><feGaussianBlur stdDeviation="0.4"/></filter></defs><path d="M28.4 9.0L59.4 9.0L78.3 28.4L78.3 59.4L59.4 78.6L28.0 78.6L8.2 59.4L8.2 28.0Z" fill="#050505" opacity=".55" filter="url(#b29h)"/><path d="M28.4 9.0L59.4 9.0L78.3 28.4L78.3 59.4L59.4 78.6L28.0 78.6L8.2 59.4L8.2 28.0Z" fill="#050505" filter="url(#b29)"/><g fill="#080808" filter="url(#b29b)"><rect x="69.91" y="11.53" width="6.700" height="6.700"/><rect x="10.78" y="70.81" width="6.700" height="6.700"/></g></svg></div>
<div class="t" style="left:1060px;top:305px;width:90px;height:90px;"><svg width="90" height="90" viewBox="0 0 90 90"><defs><filter id="b210" x="-20%" y="-20%" width="140%" height="140%"><feGaussianBlur stdDeviation="0.25"/></filter><filter id="lf" x="-10%" y="-10%" width="120%" height="120%"><feTurbulence type="fractalNoise" baseFrequency="0.3" numOctaves="2" seed="5" result="n"/><feDisplacementMap in="SourceGraphic" in2="n" scale="5" xChannelSelector="R" yChannelSelector="G"/></filter></defs><g filter="url(#b210)"><g filter="url(#lf)"><path d="M57.6 6.0L62.1 4.5L65.1 7.5L68.9 6.0L71.9 9.7L75.6 9.0L78.6 7.5L81.6 8.2L82.3 12.7L80.8 15.7L83.8 18.0L83.1 21.7L84.6 26.2L83.1 29.9L84.6 32.9L81.6 34.0L78.6 30.7L76.3 24.7L75.6 15.7L69.6 13.9L59.1 13.5Z" fill="#0a0a0a"/><path d="M9.0 54.6L5.2 56.1L6.7 60.6L4.5 62.9L7.5 66.6L5.2 70.4L9.7 72.6L7.5 76.3L6.7 80.8L11.2 81.6L14.2 78.6L17.2 81.6L21.0 80.1L24.7 83.1L26.9 80.8L22.5 76.8L15.7 76.3L13.9 72.6L13.5 60.6Z" fill="#0a0a0a"/></g><path d="M26.3 5.2L83.9 26.2L62.9 83.8L5.3 62.8Z" fill="#1b1b1b"/><path d="M62.9 5.2L83.9 62.8L26.3 83.8L5.3 26.2Z" fill="#3d3d3d" stroke="#111" stroke-width=".5"/><path d="M44.6 1.1L88.0 44.5L44.6 87.9L1.2 44.5Z" fill="#858585" stroke="#161616" stroke-width=".7"/><rect x="14" y="14" width="61.500" height="61.500" fill="#f2f2f2" stroke="#0a0a0a" stroke-width="1.300"/></g></svg></div>
<div class="t" style="left:10px;top:453px;width:90px;height:90px;"><svg width="90" height="90" viewBox="0 0 90 90"><rect x="9.700" y="8.300" width="72.200" height="71.800" fill="#050505"/><circle cx="12.3" cy="5.600" r=".9" fill="#222"/><circle cx="65.8" cy="85.200" r=".9" fill="#111"/><circle cx="16.3" cy="5.600" r=".9" fill="#222"/><circle cx="69.7" cy="85.200" r=".9" fill="#111"/><circle cx="20.3" cy="5.600" r=".9" fill="#222"/><circle cx="73.6" cy="85.200" r=".9" fill="#111"/><circle cx="24.3" cy="5.600" r=".9" fill="#222"/><circle cx="77.5" cy="85.200" r=".9" fill="#111"/><circle cx="28.3" cy="5.600" r=".9" fill="#222"/><circle cx="81.4" cy="85.200" r=".9" fill="#111"/><path d="M30 5.600H54.800" stroke="#666" stroke-width=".9"/><path d="M37.900 85.200H63.800" stroke="#0a0a0a" stroke-width=".9"/></svg></div>
<div class="t" style="left:115px;top:453px;width:90px;height:90px;"><svg width="90" height="90" viewBox="0 0 90 90"><defs><filter id="b31" x="-20%" y="-20%" width="140%" height="140%"><feGaussianBlur stdDeviation="0.22"/></filter></defs><rect x="7.900" y="7.900" width="72.900" height="72.900" rx="1.600" fill="#050505"/><g stroke="#f1f1f1" fill="none" filter="url(#b31)" stroke-linecap="butt"><path d="M39.67 18.41L71.86 18.41" stroke-width="1.6"/><path d="M48.95 7.93L48.95 26.95" stroke-width="1.6"/><path d="M48.35 26.2L76.35 26.2" stroke-width="1.4"/><path d="M64.37 7.93L64.37 35.48" stroke-width="1.6"/><path d="M55.39 34.88L64.97 34.88" stroke-width="1.4"/><path d="M71.41 7.93L71.41 19.01" stroke-width="1.6"/><path d="M76.8 7.93L76.8 21.71" stroke-width="1.0"/><path d="M11.98 53.89L24.55 53.89" stroke-width="1.3"/><path d="M23.95 53.29L23.95 80.84" stroke-width="1.6"/><path d="M12.72 64.82L37.43 64.82" stroke-width="1.4"/><path d="M12.72 64.22L12.72 80.84" stroke-width="1.6"/><path d="M17.96 57.63L17.96 80.84" stroke-width="1.4"/><path d="M21.71 73.8L30.54 73.8" stroke-width="1.3"/><path d="M29.94 73.8L29.94 80.84" stroke-width="1.6"/><path d="M26.5 73.8L26.5 80.84" stroke-width="1.3"/></g></svg></div>
<div class="t" style="left:220px;top:453px;width:90px;height:90px;"><svg width="90" height="90" viewBox="0 0 90 90"><defs><filter id="b32" x="-20%" y="-20%" width="140%" height="140%"><feGaussianBlur stdDeviation="0.3"/></filter></defs><g filter="url(#b32)"><g fill="none" stroke="#0a0a0a"><circle cx="12" cy="12" r="12" stroke-width="1.800"/><circle cx="14.200" cy="13.500" r="10.500" stroke-width="1.200"/><circle cx="60.600" cy="29.200" r="28.200" stroke-width="2.300"/><circle cx="18.700" cy="69.600" r="16.500" stroke-width="2.400"/><circle cx="78.600" cy="74.100" r="10.500" stroke-width="1.300"/><circle cx="81.600" cy="80" r="8" stroke-width="1.300"/></g><rect x="6.700" y="6" width="76.100" height="76.300" fill="#0e0e0e"/></g></svg></div>
<div class="t" style="left:325px;top:453px;width:90px;height:90px;"><svg width="90" height="90" viewBox="0 0 90 90"><defs><filter id="b33" x="-20%" y="-20%" width="140%" height="140%"><feGaussianBlur stdDeviation="0.5"/></filter></defs><text filter="url(#txf)" x="72.500" y="29.500" font-family="Liberation Serif,serif" font-style="italic" font-weight="bold" font-size="31" fill="#0a0a0a" textLength="14.500" lengthAdjust="spacingAndGlyphs">C</text><path d="M69.500 3.500C68.500 9 66.500 14 64.300 18.200C66.500 16.500 69 16.500 71 17.500" fill="none" stroke="#0a0a0a" stroke-width="1.300"/><rect x="74.100" y="30.700" width="12.300" height="21.300" fill="#0a0a0a"/><text filter="url(#txf)" x="76.300" y="48.700" font-family="Liberation Sans,sans-serif" font-size="17.500" fill="#eee" textLength="7.500" lengthAdjust="spacingAndGlyphs">P</text><ellipse cx="39.400" cy="45.700" rx="36.900" ry="37.400" fill="#050505" filter="url(#b33)"/></svg></div>
<div class="t" style="left:430px;top:453px;width:90px;height:90px;"><svg width="90" height="90" viewBox="0 0 90 90"><defs><filter id="b34" x="-20%" y="-20%" width="140%" height="140%"><feGaussianBlur stdDeviation="2.0"/></filter><filter id="b34b" x="-20%" y="-20%" width="140%" height="140%"><feGaussianBlur stdDeviation="0.45"/></filter></defs><g filter="url(#b34)" fill="#a2a2a2"><rect x="58" y="8" width="22" height="22"/><rect x="9" y="59" width="22" height="22"/><rect x="2" y="36" width="12" height="30" fill="#c4c4c4"/><rect x="76" y="22" width="10" height="30" fill="#c8c8c8"/></g><g fill="none" stroke="#a8a8a8" stroke-width=".6" filter="url(#b34b)"><path d="M6 30c-3-8 2-16 10-14c6 2 4 10-1 8M12 12c6-8 16-8 20-2M5 45c2 6 0 12 4 18M20 6c4 4 3 10-2 12M8 22c-4 2-5 8-1 10M26 4c-6 2-8 8-4 12M4 52c4-2 8 0 8 4"/><path d="M50 8c6-6 16-4 18 3M84 26c4 8 2 14-2 18M82 50c6 8 4 20-4 24c-6 2-8-4-4-6M48 80c8 6 18 4 24-2M36 84c6 2 10 0 12-4M68 62c4 4 10 2 10-4M56 84c8 2 18-2 22-10M80 60c4 2 6 8 2 12M44 6c2-3 6-3 8 0"/><g stroke="#5a5a5a" stroke-width=".7"><rect x="61" y="11" width="16" height="16"/><rect x="64" y="14" width="10" height="10"/><rect x="12" y="62" width="16" height="16"/><rect x="15" y="65" width="10" height="10"/><path d="M56 13.500h26M56 24.500h26M63.500 6v26M74.500 6v26M7 64.500h26M7 75.500h26M14.500 57v26M25.500 57v26" stroke="#8a8a8a" stroke-width=".5"/></g><rect x="66.500" y="16.500" width="5" height="5" fill="#1a1a1a" stroke="none"/><rect x="17.500" y="67.500" width="5" height="5" fill="#1a1a1a" stroke="none"/></g><path d="M31.4 12.4L57.3 12.4L76.8 31.9L76.8 57.6L57.3 76.8L31.4 76.8L12.7 57.6L12.7 31.9Z" fill="#4a4a4a"/><path d="M32.2 14.2L56.7 14.2L75.3 32.5L75.3 57.0L56.7 75.3L32.2 75.3L14.2 57.0L14.2 32.5Z" fill="none" stroke="#d0d0d0" stroke-width=".6"/><path d="M32.8 15.7L56.1 15.7L73.8 33.1L73.8 56.3L56.1 73.8L32.8 73.8L15.7 56.3L15.7 33.1Z" fill="#050505"/></svg></div>
<div class="t" style="left:535px;top:453px;width:90px;height:90px;"><svg width="90" height="90" viewBox="0 0 90 90"><defs><filter id="b35" x="-20%" y="-20%" width="140%" height="140%"><feGaussianBlur stdDeviation="0.35"/></filter></defs><g filter="url(#b35)" fill="#050505"><path d="M21.7 9.0L29.2 9.7L33.7 8.2L39.7 9.7L45.7 9.0L51.6 9.7L56.9 10.5L62.1 6.7L67.4 2.5L68.4 4.0L63.6 9.7L60.6 13.5L62.1 17.2L68.1 19.5L72.6 22.5L77.1 21.0L76.3 24.0L73.4 25.4L74.9 30.7L76.3 36.7L78.6 39.7L76.8 42.7L76.3 48.7L74.9 53.9L71.1 57.6L68.9 61.4L71.9 65.9L77.1 70.4L75.6 71.9L72.6 69.3L76.8 76.3L75.3 77.4L69.6 71.1L66.6 68.9L64.4 71.9L61.4 71.1L57.6 72.6L53.9 71.9L50.9 72.6L47.9 76.3L44.9 77.8L44.2 74.9L40.4 77.8L38.2 75.6L36.7 80.8L35.2 76.3L32.9 74.1L29.9 72.6L25.4 73.4L20.2 75.6L19.5 74.1L22.5 70.4L21.7 66.9L18.0 68.1L16.5 66.3L12.7 66.6L14.2 63.3L11.2 62.1L5.2 67.4L3.4 66.3L9.0 60.6L10.5 56.9L8.2 53.1L6.7 48.7L6.0 42.7L4.5 36.7L4.5 32.2L6.7 28.4L9.0 25.4L6.7 23.2L9.7 20.5L14.2 18.0L18.0 14.2L21.0 12.0Z"/><path d="M10.93 7.93L12.13 10.48L10.93 13.02L9.73 10.48z"/><circle cx="80.09" cy="33.68" r="1"/><circle cx="43.41" cy="82.78" r="1"/><circle cx="14.97" cy="12.43" r=".6"/><circle cx="84.58" cy="39.67" r=".5"/></g></svg></div>
<div class="t" style="left:640px;top:453px;width:90px;height:90px;"><svg width="90" height="90" viewBox="0 0 90 90"><path d="M3.4 3.4L84.6 3.4L76.3 10.5L84.6 19.2L76.3 26.9L84.6 35.6L76.3 43.4L85.3 52.4L76.3 60.6L84.6 68.9L76.3 76.8L84.6 85.6L3.4 85.6Z" fill="#050505"/></svg></div>
<div class="t" style="left:745px;top:453px;width:90px;height:90px;"><svg width="90" height="90" viewBox="0 0 90 90"><defs><radialGradient id="g37" cx="50%" cy="50%" r="50%"><stop offset="0" stop-color="#040404"/><stop offset=".76" stop-color="#060606"/><stop offset=".9" stop-color="#3e3e3e"/><stop offset=".97" stop-color="#7c7c7c"/><stop offset="1" stop-color="#929292"/></radialGradient><filter id="b37" x="-20%" y="-20%" width="140%" height="140%"><feGaussianBlur stdDeviation="0.3"/></filter></defs><g filter="url(#b37)"><circle cx="44.500" cy="44.300" r="42" fill="#080808"/><circle cx="44.500" cy="44.300" r="40.200" fill="none" stroke="#d8d8d8" stroke-width=".5"/><circle cx="44.500" cy="44.300" r="38.300" fill="url(#g37)"/><circle cx="44.500" cy="44.300" r="38.300" fill="none" stroke="#b0b0b0" stroke-width=".45"/></g></svg></div>
<div class="t" style="left:850px;top:453px;width:90px;height:90px;background:#e0e0e0"><svg width="90" height="90" viewBox="0 0 90 90"><defs><filter id="b38" x="-20%" y="-20%" width="140%" height="140%"><feGaussianBlur stdDeviation="0.35"/></filter></defs><g fill="#050505" filter="url(#b38)"><circle cx="44.2" cy="44.9" r="24.200"/><g transform="translate(44.2 44.9) rotate(0)"><path d="M-1.900 -23L0 -45L1.900 -23z"/><path d="M0 -39L5.300 -33.600L1.500 -31.300L-1.500 -31.300L-5.300 -33.600z"/><path d="M0 -31.500L3.800 -27.600L1.600 -24L-1.600 -24L-3.800 -27.600z"/><g transform="rotate(-20.5)"><path d="M-0.6 -31.800L-2.4 -27.800L1.200 -23L-1.200 -23L1.2 -27.500z"/><path d="M0.8 -28L3.6 -29.200L1.2 -25.500z"/></g><g transform="rotate(20.5)"><path d="M0.6 -31.800L2.4 -27.800L1.200 -23L-1.200 -23L-1.2 -27.500z"/><path d="M-0.8 -28L-3.6 -29.200L-1.2 -25.500z"/></g></g><g transform="translate(44.2 44.9) rotate(60)"><path d="M-1.900 -23L0 -45L1.900 -23z"/><path d="M0 -39L5.300 -33.600L1.500 -31.300L-1.500 -31.300L-5.300 -33.600z"/><path d="M0 -31.500L3.800 -27.600L1.600 -24L-1.600 -24L-3.800 -27.600z"/><g transform="rotate(-20.5)"><path d="M-0.6 -31.800L-2.4 -27.800L1.200 -23L-1.200 -23L1.2 -27.500z"/><path d="M0.8 -28L3.6 -29.200L1.2 -25.500z"/></g><g transform="rotate(20.5)"><path d="M0.6 -31.800L2.4 -27.800L1.200 -23L-1.200 -23L-1.2 -27.500z"/><path d="M-0.8 -28L-3.6 -29.200L-1.2 -25.500z"/></g></g><g transform="translate(44.2 44.9) rotate(120)"><path d="M-1.900 -23L0 -45L1.900 -23z"/><path d="M0 -39L5.300 -33.600L1.500 -31.300L-1.500 -31.300L-5.300 -33.600z"/><path d="M0 -31.500L3.800 -27.600L1.600 -24L-1.600 -24L-3.800 -27.600z"/><g transform="rotate(-20.5)"><path d="M-0.6 -31.800L-2.4 -27.800L1.200 -23L-1.200 -23L1.2 -27.500z"/><path d="M0.8 -28L3.6 -29.200L1.2 -25.500z"/></g><g transform="rotate(20.5)"><path d="M0.6 -31.800L2.4 -27.800L1.200 -23L-1.200 -23L-1.2 -27.500z"/><path d="M-0.8 -28L-3.6 -29.200L-1.2 -25.500z"/></g></g><g transform="translate(44.2 44.9) rotate(180)"><path d="M-1.900 -23L0 -45L1.900 -23z"/><path d="M0 -39L5.300 -33.600L1.500 -31.300L-1.500 -31.300L-5.300 -33.600z"/><path d="M0 -31.500L3.800 -27.600L1.600 -24L-1.600 -24L-3.800 -27.600z"/><g transform="rotate(-20.5)"><path d="M-0.6 -31.800L-2.4 -27.800L1.200 -23L-1.200 -23L1.2 -27.500z"/><path d="M0.8 -28L3.6 -29.200L1.2 -25.500z"/></g><g transform="rotate(20.5)"><path d="M0.6 -31.800L2.4 -27.800L1.200 -23L-1.200 -23L-1.2 -27.500z"/><path d="M-0.8 -28L-3.6 -29.200L-1.2 -25.500z"/></g></g><g transform="translate(44.2 44.9) rotate(240)"><path d="M-1.900 -23L0 -45L1.900 -23z"/><path d="M0 -39L5.300 -33.600L1.500 -31.300L-1.500 -31.300L-5.300 -33.600z"/><path d="M0 -31.500L3.800 -27.600L1.600 -24L-1.600 -24L-3.800 -27.600z"/><g transform="rotate(-20.5)"><path d="M-0.6 -31.800L-2.4 -27.800L1.200 -23L-1.200 -23L1.2 -27.500z"/><path d="M0.8 -28L3.6 -29.200L1.2 -25.500z"/></g><g transform="rotate(20.5)"><path d="M0.6 -31.800L2.4 -27.800L1.200 -23L-1.200 -23L-1.2 -27.500z"/><path d="M-0.8 -28L-3.6 -29.200L-1.2 -25.500z"/></g></g><g transform="translate(44.2 44.9) rotate(300)"><path d="M-1.900 -23L0 -45L1.900 -23z"/><path d="M0 -39L5.300 -33.600L1.500 -31.300L-1.500 -31.300L-5.300 -33.600z"/><path d="M0 -31.500L3.800 -27.600L1.600 -24L-1.600 -24L-3.800 -27.600z"/><g transform="rotate(-20.5)"><path d="M-0.6 -31.800L-2.4 -27.800L1.200 -23L-1.200 -23L1.2 -27.500z"/><path d="M0.8 -28L3.6 -29.200L1.2 -25.500z"/></g><g transform="rotate(20.5)"><path d="M0.6 -31.800L2.4 -27.800L1.200 -23L-1.200 -23L-1.2 -27.500z"/><path d="M-0.8 -28L-3.6 -29.200L-1.2 -25.500z"/></g></g></g></svg></div>
<div class="t" style="left:955px;top:453px;width:90px;height:90px;"><svg width="90" height="90" viewBox="0 0 90 90"><rect width="90" height="90" fill="#050505"/><ellipse cx="44.900" cy="89.800" rx="44" ry="13.300" fill="#f1f1f1"/></svg></div>
<div class="t" style="left:1060px;top:462px;width:90px;height:81px;"><svg width="90" height="81" viewBox="0 0 90 81"><defs><filter id="b310" x="-20%" y="-20%" width="140%" height="140%"><feGaussianBlur stdDeviation="0.3"/></filter></defs><g filter="url(#b310)"><g fill="none" stroke="#111"><circle cx="38.200" cy="47.900" r="32.200" stroke-width="1.600"/><circle cx="62.900" cy="26.200" r="18.700" stroke-width="1.100"/><circle cx="70.400" cy="53.100" r="15" stroke-width="1.300"/><circle cx="40.400" cy="8.200" r="8.200" stroke-width="1.200"/><path d="M8 40c-3-6-4-12 0-16c3-2 5 0 4 3M12 36c-2-8 2-16 10-22M22 16c2-6 6-8 6-14M5 30c2-2 4-2 6 0M14 48c0-6 4-10 8-12" stroke="#999" stroke-width=".5"/><path d="M75.0 10.78C77.84 8.68 80.09 7.78 82.34 5.99L87.57 1.8C86.38 5.69 84.88 7.78 83.38 9.58L82.19 8.38L78.59 10.18z" fill="#111" stroke="none"/><path d="M66.62 13.47l2 1.500l-1 2M69.61 23.65l3-1l2 -2M75.6 34.13l1.500 2l2 0M68.11 34.43l3 1" stroke-width=".9"/></g><g fill="#050505"><circle cx="35.18" cy="8.98" r=".9"/><circle cx="31.14" cy="16.02" r=".9"/><circle cx="26.95" cy="22.9" r=".9"/><circle cx="23.95" cy="28.44" r=".9"/><circle cx="20.96" cy="33.68" r=".9"/><circle cx="17.96" cy="38.92" r=".9"/><circle cx="48.700" cy="68.900" r="7.200"/><circle cx="29.900" cy="64.700" r="3"/><circle cx="35.900" cy="70.100" r="1.400"/><path d="M42.400 1.300L9.500 57L77.300 57z"/><path d="M9.500 57c4 3 8 3 12 1l-6-3z"/></g><circle cx="51.600" cy="67.300" r="1.500" fill="#eee"/></g></svg></div>
<div class="t" style="left:10px;top:601px;width:90px;height:90px;"><svg width="90" height="90" viewBox="0 0 90 90"><circle cx="44.300" cy="45.800" r="42.100" fill="#050505"/><g fill="#050505"><path d="M3 3.700h6.300v2.400h-3.800v2.800H3z"/><path d="M87.400 3.200h-6.600v2.400h4v2.800h2.600z"/></g></svg></div>
<div class="t" style="left:115px;top:601px;width:90px;height:90px;"><svg width="90" height="90" viewBox="0 0 90 90"><rect width="90" height="90" fill="#050505"/><path d="M89.500 0L71.300 18.500L73.200 20.200L71.800 21.500L74 23.200L73.200 24.500L76 26L90 40V0z" fill="#f1f1f1"/></svg></div>
<div class="t" style="left:220px;top:601px;width:90px;height:90px;"><svg width="90" height="90" viewBox="0 0 90 90"><defs><filter id="b42" x="-20%" y="-20%" width="140%" height="140%"><feGaussianBlur stdDeviation="0.3"/></filter></defs><g fill="#050505" filter="url(#b42)"><rect x="11.500" y="11.700" width="66" height="66"/><g><rect x="4" y="4.3" width="6" height="6"/><rect x="11.7" y="5.5" width="4.5" height="4.5"/><rect x="17.5" y="7" width="3" height="3"/><rect x="22" y="8.5" width="1.5" height="1.5"/><rect x="5.2" y="12" width="4.5" height="4.5"/><rect x="6.7" y="17.7" width="3" height="3"/><rect x="8.2" y="22.2" width="1.5" height="1.5"/></g><g transform="translate(89 0) scale(-1 1)"><rect x="4" y="4.3" width="6" height="6"/><rect x="11.7" y="5.5" width="4.5" height="4.5"/><rect x="17.5" y="7" width="3" height="3"/><rect x="22" y="8.5" width="1.5" height="1.5"/><rect x="5.2" y="12" width="4.5" height="4.5"/><rect x="6.7" y="17.7" width="3" height="3"/><rect x="8.2" y="22.2" width="1.5" height="1.5"/></g></g></svg></div>
<div class="t" style="left:325px;top:601px;width:90px;height:90px;"><svg width="90" height="90" viewBox="0 0 90 90"><defs><filter id="b43" x="-20%" y="-20%" width="140%" height="140%"><feGaussianBlur stdDeviation="1.0"/></filter><filter id="b43b" x="-20%" y="-20%" width="140%" height="140%"><feGaussianBlur stdDeviation="0.3"/></filter></defs><g fill="none" stroke="#1c1c1c" filter="url(#b43b)"><rect x="9.700" y="11.900" width="69" height="60" stroke-width="1.500" stroke="#0c0c0c"/><rect x="11.600" y="13.800" width="65.200" height="56" stroke-width="1.200" stroke="#3a3a3a"/><rect x="13.500" y="15.800" width="61.400" height="52" stroke-width="1.100" stroke="#222"/></g><circle cx="44.500" cy="40.700" r="34.400" fill="#050505" filter="url(#b43)"/></svg></div>
<div class="t" style="left:430px;top:601px;width:90px;height:90px;"><svg width="90" height="90" viewBox="0 0 90 90"><defs><filter id="b44" x="-20%" y="-20%" width="140%" height="140%"><feGaussianBlur stdDeviation="1.6"/></filter></defs><rect width="90" height="90" fill="#050505"/><g fill="#f4f4f4" filter="url(#b44)"><circle cx="25.500" cy="28.500" r="16.300"/><circle cx="63" cy="28.500" r="16.300"/></g></svg></div>
<div class="t" style="left:535px;top:601px;width:90px;height:90px;"><svg width="90" height="90" viewBox="0 0 90 90"><defs><radialGradient id="g45" cx="50%" cy="50%" r="50%"><stop offset="0" stop-color="#000" stop-opacity="1"/><stop offset=".33" stop-color="#000" stop-opacity="1"/><stop offset=".444" stop-color="#000" stop-opacity=".88"/><stop offset=".556" stop-color="#000" stop-opacity=".67"/><stop offset=".711" stop-color="#000" stop-opacity=".34"/><stop offset=".844" stop-color="#000" stop-opacity=".1"/><stop offset=".933" stop-color="#000" stop-opacity="0"/></radialGradient></defs><circle cx="45.400" cy="50" r="45" fill="url(#g45)"/></svg></div>
<div class="t" style="left:640px;top:601px;width:90px;height:90px;"><svg width="90" height="90" viewBox="0 0 90 90"><g fill="#050505"><rect x="7.300" y="6.900" width="6.900" height="76"/><rect x="18.800" y="6.900" width="3.700" height="76"/><rect x="29" y="6.900" width="53.800" height="76"/></g><path d="M67.500 6.500L83.300 21.300" stroke="#f1f1f1" stroke-width="2.400"/></svg></div>
<div class="t" style="left:745px;top:601px;width:90px;height:90px;"><svg width="90" height="90" viewBox="0 0 90 90"><circle cx="44.900" cy="48.500" r="45" fill="none" stroke="#050505" stroke-width="6.500"/><path d="M69.500 17L60 25.500H70.600z" fill="#050505"/></svg></div>
<div class="t" style="left:850px;top:601px;width:90px;height:90px;"><svg width="90" height="90" viewBox="0 0 90 90"><rect width="90" height="90" fill="#050505"/><path d="M89.500 0L71.300 18.500L73.200 20.200L71.800 21.500L74 23.200L73.200 24.500L76 26L90 40V0z" fill="#f1f1f1"/></svg></div>
<div class="t" style="left:955px;top:601px;width:90px;height:90px;"><svg width="90" height="90" viewBox="0 0 90 90"><defs><filter id="b49" x="-20%" y="-20%" width="140%" height="140%"><feGaussianBlur stdDeviation="0.35"/></filter></defs><g filter="url(#b49)"><path d="M45.400 12.500L38.900 19L43.600 25.500H46.500z" fill="#0a0a0a"/><g fill="none" stroke="#0a0a0a" stroke-width="1.700"><path d="M46 25.500C48 19 51 14 55 12.500C59 11.500 61 15 60 18.500C59 22 55.500 22 55.500 18C55.500 14 60 11 64 12.500C68 14 68.500 19 66.500 21.500C64.500 23.500 62.500 21 63.500 18C64.500 15 69 13.500 73 15.500C76.500 17.500 77 21.500 74.500 23C72.500 24 71.500 22 72.500 20"/><path d="M27 15.500C25.500 18 27 22 30 24.500C33 25.500 34.500 24 33.500 21C32 18 29.500 15.500 27 15.500zM28 17L32.500 23.500" stroke-width="1"/></g></g></svg></div>
<div class="t" style="left:1060px;top:601px;width:90px;height:90px;"><svg width="90" height="90" viewBox="0 0 90 90"><g fill="#050505"><circle cx="45.400" cy="11.500" r="8.900"/><circle cx="22.600" cy="19.900" r="8.900"/><circle cx="68.500" cy="20.800" r="8.900"/></g><g fill="#f3f3f3" stroke="#0a0a0a" stroke-width=".8"><path d="M30 10.600L36 12.500L44.500 20.800V26H30.500L27.800 19z"/><path d="M60.800 10.600L54.600 12.500L46.300 20.800V26H61.200L63 19z"/></g><g fill="none" stroke="#0a0a0a" stroke-width="1.100"><path d="M33 14.500L39.500 25M36.500 16.500v4M34 19.500l3.500 3M39.500 20v4"/><path d="M57.800 14.500L51.500 25M54.500 16.500v4M57 19.500l-3.500 3M51.500 20v4"/></g></svg></div>
<div class="n" id="n0_0_0" style="left:-9.5px;top:107px;letter-spacing:-0.055px;padding-left:-0.055px"><span>fichiers BMP</span></div>
<div class="n" id="n0_1_0" style="left:95.5px;top:107px;letter-spacing:0.112px;padding-left:0.112px"><span><span style="letter-spacing:-1.488px">____</span><span style="letter-spacing:-0.438px">00</span>uu</span></div>
<div class="n" id="n0_2_0" style="left:200.5px;top:107px;letter-spacing:-0.098px;padding-left:-0.098px"><span><span style="letter-spacing:-1.698px">____</span>zxzp</span></div>
<div class="n" id="n0_3_0" style="left:305.5px;top:107px;letter-spacing:-0.190px;padding-left:-0.190px"><span><span style="letter-spacing:-1.790px">___</span><span style="letter-spacing:-0.740px">00</span>OUIII</span></div>
<div class="n" id="n0_4_0" style="left:410.5px;top:107px;letter-spacing:-0.070px;padding-left:-0.070px"><span><span style="letter-spacing:-1.670px">___</span>avatars<span style="letter-spacing:-1.670px">_</span>templ...</span></div>
<div class="n" id="n0_5_0" style="left:515.5px;top:107px;letter-spacing:0.119px;padding-left:0.119px"><span><span style="letter-spacing:-1.481px">___</span>par moi meme</span></div>
<div class="n" id="n0_5_1" style="left:515.5px;top:122px;letter-spacing:-0.206px;padding-left:-0.206px"><span>le <span style="letter-spacing:-0.756px">10</span> <span style="letter-spacing:-0.756px">10</span> <span style="letter-spacing:-0.756px">2025</span></span></div>
<div class="n" id="n0_6_0" style="left:620.5px;top:107px;letter-spacing:-0.022px;padding-left:-0.022px"><span><span style="letter-spacing:-1.622px">_</span><span style="letter-spacing:-0.572px">1</span>testmask</span></div>
<div class="n" id="n0_7_0" style="left:725.5px;top:107px;letter-spacing:-0.110px;padding-left:-0.110px"><span><span style="letter-spacing:-1.710px">_</span>mask</span></div>
<div class="n" id="n0_8_0" style="left:830.5px;top:107px;letter-spacing:0.035px;padding-left:0.035px"><span><span style="letter-spacing:-0.515px">00000</span></span></div>
<div class="n" id="n0_9_0" style="left:935.5px;top:107px;letter-spacing:0.025px;padding-left:0.025px"><span><span style="letter-spacing:-0.525px">0000</span></span></div>
<div class="n" id="n0_10_0" style="left:1040.5px;top:107px;letter-spacing:0.072px;padding-left:0.072px"><span><span style="letter-spacing:-0.478px">00</span>.mr<span style="letter-spacing:-1.528px">_</span>.<span style="letter-spacing:-0.478px">0</span></span></div>
<div class="n" id="n1_0_0" style="left:-9.5px;top:255px;letter-spacing:-0.062px;padding-left:-0.062px"><span><span style="letter-spacing:-0.612px">00</span><span style="letter-spacing:-1.662px">___</span>mask</span></div>
<div class="n" id="n1_1_0" style="left:95.5px;top:255px;letter-spacing:0.274px;padding-left:0.274px"><span><span style="letter-spacing:-0.276px">00</span><span style="letter-spacing:-1.326px">_</span>mr</span></div>
<div class="n" id="n1_2_0" style="left:200.5px;top:255px;letter-spacing:-0.113px;padding-left:-0.113px"><span><span style="letter-spacing:-0.663px">00</span>amask</span></div>
<div class="n" id="n1_3_0" style="left:305.5px;top:255px;letter-spacing:-0.177px;padding-left:-0.177px"><span><span style="letter-spacing:-0.727px">0</span><span style="letter-spacing:-1.777px">_</span>a<span style="letter-spacing:-0.727px">0</span>b<span style="letter-spacing:-0.727px">8</span>e<span style="letter-spacing:-1.777px">_</span><span style="letter-spacing:-0.727px">8</span>ed<span style="letter-spacing:-0.727px">2236</span>...</span></div>
<div class="n" id="n1_4_0" style="left:410.5px;top:255px;letter-spacing:0.316px;padding-left:0.316px"><span><span style="letter-spacing:-0.234px">0</span>k<span style="letter-spacing:-0.234px">4</span>p</span></div>
<div class="n" id="n1_5_0" style="left:515.5px;top:255px;letter-spacing:0.134px;padding-left:0.134px"><span><span style="letter-spacing:-0.416px">0</span>n<span style="letter-spacing:-0.416px">13</span></span></div>
<div class="n" id="n1_6_0" style="left:620.5px;top:255px;letter-spacing:-0.036px;padding-left:-0.036px"><span><span style="letter-spacing:-0.586px">1</span><span style="letter-spacing:-1.636px">_</span>imagesia-com...</span></div>
<div class="n" id="n1_7_0" style="left:725.5px;top:255px;letter-spacing:-0.004px;padding-left:-0.004px"><span><span style="letter-spacing:-0.554px">1</span>n<span style="letter-spacing:-0.554px">94</span><span style="letter-spacing:-1.604px">_</span>imagesia-...</span></div>
<div class="n" id="n1_8_0" style="left:830.5px;top:255px;letter-spacing:-0.027px;padding-left:-0.027px"><span><span style="letter-spacing:-0.577px">2</span>p<span style="letter-spacing:-0.577px">414</span>(<span style="letter-spacing:-0.577px">1</span>)</span></div>
<div class="n" id="n1_9_0" style="left:935.5px;top:255px;letter-spacing:0.270px;padding-left:0.270px"><span><span style="letter-spacing:-0.280px">3</span>mb<span style="letter-spacing:-0.280px">1</span></span></div>
<div class="n" id="n1_10_0" style="left:1040.5px;top:255px;letter-spacing:-0.117px;padding-left:-0.117px"><span><span style="letter-spacing:-0.667px">3</span>tsx</span></div>
<div class="n" id="n2_0_0" style="left:-9.5px;top:403px;letter-spacing:0.064px;padding-left:0.064px"><span><span style="letter-spacing:-0.486px">4</span><span style="letter-spacing:-1.536px">_</span>imagesia-com...</span></div>
<div class="n" id="n2_1_0" style="left:95.5px;top:403px;letter-spacing:0.091px;padding-left:0.091px"><span><span style="letter-spacing:-0.459px">5</span>yu<span style="letter-spacing:-0.459px">3</span></span></div>
<div class="n" id="n2_2_0" style="left:200.5px;top:403px;letter-spacing:0.290px;padding-left:0.290px"><span><span style="letter-spacing:-0.260px">6</span>rfu</span></div>
<div class="n" id="n2_3_0" style="left:305.5px;top:403px;letter-spacing:-0.062px;padding-left:-0.062px"><span><span style="letter-spacing:-0.612px">8</span>dgl<span style="letter-spacing:-1.662px">_</span>imagesia-...</span></div>
<div class="n" id="n2_4_0" style="left:410.5px;top:403px;letter-spacing:0.023px;padding-left:0.023px"><span><span style="letter-spacing:-0.527px">9</span><span style="letter-spacing:-1.577px">_</span>imagesia-com...</span></div>
<div class="n" id="n2_5_0" style="left:515.5px;top:403px;letter-spacing:-0.430px;padding-left:-0.430px"><span><span style="letter-spacing:-0.980px">11</span></span></div>
<div class="n" id="n2_6_0" style="left:620.5px;top:403px;letter-spacing:-0.026px;padding-left:-0.026px"><span><span style="letter-spacing:-0.576px">11</span><span style="letter-spacing:-1.626px">_</span>imagesia-co...</span></div>
<div class="n" id="n2_7_0" style="left:725.5px;top:403px;letter-spacing:-0.002px;padding-left:-0.002px"><span><span style="letter-spacing:-0.552px">12</span><span style="letter-spacing:-1.602px">_</span>imagesia-co...</span></div>
<div class="n" id="n2_8_0" style="left:830.5px;top:403px;letter-spacing:-0.043px;padding-left:-0.043px"><span><span style="letter-spacing:-0.593px">14</span><span style="letter-spacing:-1.643px">_</span>imagesia-co...</span></div>
<div class="n" id="n2_9_0" style="left:935.5px;top:403px;letter-spacing:-0.315px;padding-left:-0.315px"><span><span style="letter-spacing:-0.865px">14</span>letsseee</span></div>
<div class="n" id="n2_10_0" style="left:1040.5px;top:403px;letter-spacing:-0.076px;padding-left:-0.076px"><span><span style="letter-spacing:-0.626px">24</span><span style="letter-spacing:-1.676px">_</span><span style="letter-spacing:-0.626px">14</span></span></div>
<div class="n" id="n3_0_0" style="left:-9.5px;top:551px;letter-spacing:0.209px;padding-left:0.209px"><span><span style="letter-spacing:-0.341px">032</span>u</span></div>
<div class="n" id="n3_1_0" style="left:95.5px;top:551px;letter-spacing:-0.065px;padding-left:-0.065px"><span><span style="letter-spacing:-0.615px">51</span>st<span style="letter-spacing:-1.665px">_</span>imagesia-...</span></div>
<div class="n" id="n3_2_0" style="left:200.5px;top:551px;letter-spacing:0.306px;padding-left:0.306px"><span><span style="letter-spacing:-0.244px">68</span>m<span style="letter-spacing:-0.244px">0</span></span></div>
<div class="n" id="n3_3_0" style="left:305.5px;top:551px;letter-spacing:-0.734px;padding-left:-0.734px"><span><span style="letter-spacing:-1.284px">88</span>PREME</span></div>
<div class="n" id="n3_4_0" style="left:410.5px;top:551px;letter-spacing:-0.075px;padding-left:-0.075px"><span><span style="letter-spacing:-0.625px">5386</span></span></div>
<div class="n" id="n3_5_0" style="left:515.5px;top:551px;letter-spacing:-0.319px;padding-left:-0.319px"><span><span style="letter-spacing:-0.869px">7828358</span>DKLb</span></div>
<div class="n" id="n3_6_0" style="left:620.5px;top:551px;letter-spacing:-0.181px;padding-left:-0.181px"><span><span style="letter-spacing:-0.731px">188214991</span></span></div>
<div class="n" id="n3_7_0" style="left:725.5px;top:551px;letter-spacing:0.112px;padding-left:0.112px"><span><span style="letter-spacing:-0.438px">1494254237</span>-m<span style="letter-spacing:-0.438px">5</span>iw</span></div>
<div class="n" id="n3_8_0" style="left:830.5px;top:551px;letter-spacing:-0.195px;padding-left:-0.195px"><span><span style="letter-spacing:-0.745px">1494254243</span>-sans...</span></div>
<div class="n" id="n3_9_0" style="left:935.5px;top:551px;letter-spacing:-0.195px;padding-left:-0.195px"><span><span style="letter-spacing:-0.745px">1494254252</span>-sans...</span></div>
<div class="n" id="n3_10_0" style="left:1040.5px;top:551px;letter-spacing:-0.201px;padding-left:-0.201px"><span><span style="letter-spacing:-0.751px">1497373067</span>-sans...</span></div>
</div>
</body></html>
